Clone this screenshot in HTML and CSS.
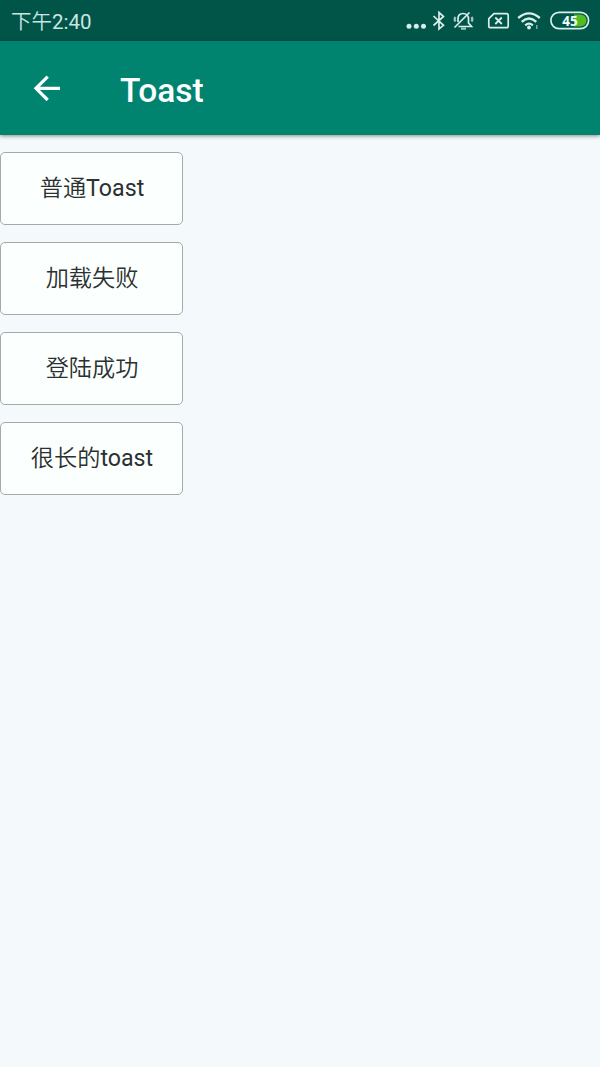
FILE: index.html
```
<!DOCTYPE html>
<html lang="zh-CN">
<head>
<meta charset="utf-8">
<title>Toast</title>
<link rel="stylesheet" href="styles.css">
</head>
<body>
<div class="status-bar">
  <span class="time">下午2:40</span>
  <svg class="status-icons" width="200" height="41" viewBox="0 0 200 41" fill="none" stroke="#d9eeea" stroke-width="1.7">
    <g fill="#d9eeea" stroke="none"><circle cx="9" cy="26.300" r="2.500"/><circle cx="16.300" cy="26.300" r="2.500"/><circle cx="23.500" cy="26.300" r="2.500"/></g>
    <path d="M33.500 16 L43.500 25.300 L39 29 V12.500 L43.500 16.500 L33.500 25.500"/>
    <path d="M58 22 V19 C58 15.500 60 13.500 63 13.500 C66.500 13.500 68.500 16 68.500 19 V23 L71.500 26.500 H58.500 M54.500 27.500 L69.500 12.500"/>
    <path d="M61 28.700 H66 M55.500 17 Q53.800 19.300 55.500 21.500 M71.500 17 Q73.200 19.300 71.500 21.500" stroke="#9cc7bf" stroke-width="2.200"/>
    <path d="M94 13.700 H106.500 Q108.200 13.700 108.200 15.400 V26 Q108.200 27.700 106.500 27.700 H90.500 Q88.800 27.700 88.800 26 V18.700 Z"/>
    <path d="M95.300 17.500 L101.800 24 M101.800 17.500 L95.300 24" stroke-width="1.800"/>
    <path d="M118.200 18 Q129 8.800 139.800 18 M121.700 21.800 Q129 15.300 136.300 21.800 M125.200 25.300 Q129 22 132.800 25.300" stroke-width="2.300"/>
    <circle cx="129" cy="27.500" r="1.900" fill="#d9eeea" stroke="none"/>
    <path d="M136.800 25 V29" stroke="#79aaa2" stroke-width="1.500"/>
    <path d="M174 14.500 H180.500 A6 6 0 0 1 180.500 26.500 H174 Z" fill="#51bd20" stroke="none"/>
    <rect x="150.900" y="12.300" width="37.700" height="16.400" rx="8.200" stroke-width="1.700"/>
    <text class="battery-level" x="170" y="25.500" text-anchor="middle">45</text>
  </svg>
</div>
<header class="app-bar">
  <svg class="back" width="28" height="28" viewBox="0 0 28 28" fill="none" stroke="#fbffff" stroke-width="3.200"><path d="M27 14.300 H3 M14.700 2.600 L3 14.300 L14.700 26"/></svg>
  <h1 class="title">Toast</h1>
</header>
<main class="content">
  <button class="btn">普通Toast</button>
  <button class="btn">加载失败</button>
  <button class="btn">登陆成功</button>
  <button class="btn">很长的toast</button>
</main>
</body>
</html>
```
FILE: styles.css
```
body {
  margin: 0;
  min-height: 1067px;
  background: #f4f9fc;
  font-family: Roboto, "Noto Sans CJK SC DemiLight", "Noto Sans CJK SC", sans-serif;
}
.status-bar {
  display: flex;
  justify-content: space-between;
  height: 41px;
  background: #005548;
}
.time {
  padding-left: 11px;
  font-size: 20.5px;
  font-weight: 400;
  line-height: 45px;
  color: #cce5e0;
}
.status-icons {
  display: block;
}
.battery-level {
  fill: #f2ffff;
  stroke: none;
  font: 700 13.5px "Open Sans", sans-serif;
}
.app-bar {
  display: flex;
  align-items: center;
  height: 94px;
  background: #00846f;
  box-shadow: 0 1px 4px rgba(0, 0, 0, 0.45);
}
.back {
  margin: 0 59px 0 33px;
}
.title {
  margin: 6px 0 0;
  color: #fbffff;
  font-size: 33.5px;
  font-weight: 500;
  line-height: 40px;
}
.content {
  display: flex;
  flex-direction: column;
  align-items: flex-start;
  gap: 17px;
  padding-top: 17px;
}
.btn {
  box-sizing: border-box;
  width: 183px;
  height: 73px;
  padding: 0 0 2px 1px;
  border: 1px solid #a5a9aa;
  border-radius: 5px;
  background: #fbfffe;
  color: #2b3030;
  font-family: inherit;
  font-size: 23.200px;
  font-weight: 400;
  line-height: 34px;
}
```
